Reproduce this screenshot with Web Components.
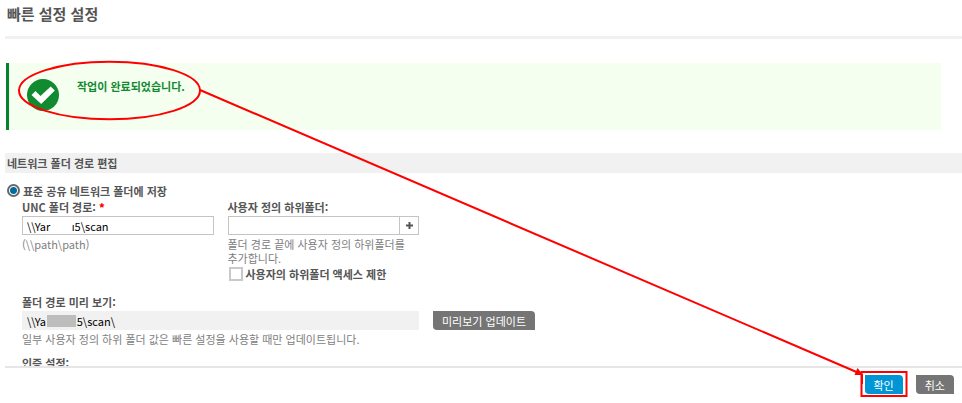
<!DOCTYPE html>
<html lang="ko">
<head>
<meta charset="utf-8">
<title>빠른 설정 설정</title>
<style>
    html, body {
        height: 100%;
        margin: 0;
    }
    body {
        background: #fff;
        color: #555;
        font: 11px/14px "Noto Sans CJK KR", "Noto Sans", sans-serif;
        word-break: keep-all;
    }
</style>
</head>
<body>

<setup-page>
    <page-title>빠른 설정 설정</page-title>
    <success-message>작업이 완료되었습니다.</success-message>
    <section-title>네트워크 폴더 경로 편집</section-title>
    <folder-form></folder-form>
    <action-button slot="actions" primary label="확인"></action-button>
    <action-button slot="actions" label="취소"></action-button>
</setup-page>
<callout-marks></callout-marks>

<script>

    const define = function (name, html, setup) {

        const template = document.createElement('template');
        template.innerHTML = html;

        window.customElements.define(name, class extends HTMLElement {

            constructor() {
                super();
                this.attachShadow({mode: 'open'});
                this.shadowRoot.appendChild(template.content.cloneNode(true));
            }

            connectedCallback() {
                if (setup) {
                    setup(this, this.shadowRoot);
                }
            }

        });

    };

    define('setup-page', `
        <main><slot></slot></main>
        <footer><slot name="actions"></slot></footer>

        <style>
            :host {
                display: flex;
                flex-direction: column;
                height: 100vh;
                padding-left: 5px;
                box-sizing: border-box;
            }
            main {
                flex: 1;
                min-height: 0;
                overflow: hidden;
            }
            footer {
                display: flex;
                justify-content: flex-end;
                gap: 13px;
                padding: 7px 8px 9px;
                border-top: 2px solid #e6e6e6;
            }
        </style>
    `);

    define('page-title', `
        <h1><slot></slot></h1>

        <style>
            :host {
                display: block;
            }
            h1 {
                margin: 0;
                padding: 0 2px 8px;
                font-size: 15px;
                line-height: 28px;
            }
            :host::after {
                content: "";
                display: block;
                height: 3px;
                background: repeating-conic-gradient(#ebebeb 0 25%, #f6f6f6 0 50%) 0 0 / 2px 2px;
            }
        </style>
    `);

    define('success-message', `
        <svg width="32" height="32" viewBox="0 0 32 32" aria-hidden="true">
            <circle cx="16" cy="16" r="16" fill="#128a30"/>
            <path d="M4.5 16 8.5 12 13.5 17 23.7 7.5 27.8 11.6 14.2 25Z" fill="#fff"/>
        </svg>
        <p><slot></slot></p>

        <style>
            :host {
                display: flex;
                align-items: flex-start;
                gap: 18px;
                min-height: 67px;
                margin: 24px 21px 23px 1px;
                padding: 16px 18px;
                box-sizing: border-box;
                border-left: 3px solid #00852a;
                background: #f4fff0;
            }
            p {
                margin: 0;
                color: #128a30;
                font-weight: bold;
            }
        </style>
    `);

    define('section-title', `
        <h2><slot></slot></h2>

        <style>
            :host {
                display: block;
                background: #f1f1f1;
            }
            h2 {
                margin: 0;
                padding: 0 2px;
                font-size: 11px;
                line-height: 20px;
            }
        </style>
    `);

    define('action-button', `
        <button type="button"></button>

        <style>
            :host {
                display: block;
            }
            button {
                display: block;
                height: 19px;
                padding: 0 9px;
                border: 0;
                border-radius: 0 4px 0 4px;
                background: #757575;
                color: #fff;
                font: inherit;
                white-space: nowrap;
            }
            :host([primary]) button {
                background: #0096d6;
            }
        </style>
    `, function (host, root) {
        root.querySelector('button').textContent = host.getAttribute('label');
    });

    define('text-field', `
        <label for="field"><span id="label"></span><b hidden> *</b></label>
        <div class="box">
            <input id="field" type="text">
            <button type="button" aria-label="추가" hidden>
                <svg width="7" height="7" viewBox="0 0 7 7"><path d="M3.5 0V7M0 3.5H7" stroke="#555" stroke-width="2"/></svg>
            </button>
        </div>
        <p><slot></slot></p>

        <style>
            :host {
                display: block;
            }
            [hidden] {
                display: none !important;
            }
            label {
                display: block;
                line-height: 17px;
                font-weight: bold;
            }
            b {
                color: #f00;
            }
            .box {
                display: flex;
                height: 19px;
                box-sizing: border-box;
                border: 1px solid #c4c4c4;
                background: #fff;
            }
            input {
                flex: 1;
                min-width: 0;
                padding: 0 4px;
                border: 0;
                outline: 0;
                background: none;
                color: #000;
                font: inherit;
            }
            button {
                display: grid;
                place-items: center;
                width: 19px;
                padding: 0;
                border: 0;
                border-left: 1px solid #c4c4c4;
                background: #fff;
            }
            p {
                margin: 2px 0 0;
                color: #808080;
            }
            :host([readonly]) .box {
                border-color: #f1f1f1;
                background: #f1f1f1;
            }
        </style>
    `, function (host, root) {
        const input = root.querySelector('input');
        root.querySelector('#label').textContent = host.getAttribute('label');
        root.querySelector('b').hidden = !host.hasAttribute('required');
        root.querySelector('button').hidden = !host.hasAttribute('addable');
        input.value = host.getAttribute('value') || '';
        input.readOnly = host.hasAttribute('readonly');
    });

    define('folder-form', `
        <label class="choice"><input type="radio" checked>표준 공유 네트워크 폴더에 저장</label>
        <div class="fields">
            <text-field label="UNC 폴더 경로:" required value="\\\\Yar&nbsp;&nbsp;&nbsp;&nbsp;&nbsp;&nbsp;&nbsp;ı5\\scan">(\\\\path\\path)</text-field>
            <div>
                <text-field label="사용자 정의 하위폴더:" addable>폴더 경로 끝에 사용자 정의 하위폴더를 추가합니다.</text-field>
                <label class="limit"><input type="checkbox">사용자의 하위폴더 액세스 제한</label>
            </div>
        </div>
        <div class="preview">
            <div class="path">
                <text-field label="폴더 경로 미리 보기:" readonly value="\\\\Ya&nbsp;&nbsp;&nbsp;&nbsp;&nbsp;&nbsp;&nbsp;&nbsp;&nbsp;&nbsp;5\\scan\\">일부 사용자 정의 하위 폴더 값은 빠른 설정을 사용할 때만 업데이트됩니다.</text-field>
                <span class="mask"></span>
            </div>
            <action-button label="미리보기 업데이트"></action-button>
        </div>
        <h3>인증 설정:</h3>

        <style>
            :host {
                display: block;
                padding: 9px 0 0 17px;
            }
            input {
                appearance: none;
                flex: none;
                box-sizing: border-box;
                width: 13px;
                height: 13px;
                margin: 0;
                background: #fff;
            }
            input[type=radio] {
                border: 2px solid #666;
                border-radius: 50%;
                background: radial-gradient(circle, #0069a0 3px, #fff 4px);
            }
            input[type=checkbox] {
                width: 14px;
                height: 14px;
                border: 2px solid #c9c9c9;
            }
            .choice, .limit {
                display: flex;
                align-items: center;
                gap: 3px;
                font-weight: bold;
            }
            .choice {
                height: 17px;
                margin-left: -15px;
            }
            .limit {
                height: 14px;
                margin: 2px 0 0 1px;
            }
            .fields {
                display: grid;
                grid-template-columns: 1fr 1fr;
                gap: 14px;
                max-width: 397px;
            }
            .preview {
                display: flex;
                gap: 14px;
                margin-top: 13px;
            }
            .preview action-button {
                margin-top: 17px;
            }
            .path {
                position: relative;
                flex: 0 1 397px;
            }
            .mask {
                position: absolute;
                left: 25px;
                top: 21px;
                width: 29px;
                height: 12px;
                background: #bdbdbd;
            }
            h3 {
                margin: 9px 0 0;
                font-size: 11px;
                line-height: 17px;
            }
        </style>
    `);

    // red ellipse, arrow and frame drawn over the page
    define('callout-marks', `
        <svg width="962" height="403" viewBox="0 0 962 403" fill="none" stroke="#f00" stroke-width="2" aria-hidden="true">
            <ellipse cx="109.5" cy="90.5" rx="90.5" ry="28.8"/>
            <path d="M200 90 860 373.5M862 374V384"/>
            <path d="M863 375 854.5 375 857.5 368Z" fill="#f00" stroke="none"/>
            <rect x="861.5" y="372" width="45" height="24"/>
        </svg>

        <style>
            :host {
                position: absolute;
                top: 0;
                left: 0;
                pointer-events: none;
            }
            svg {
                display: block;
            }
        </style>
    `);

</script>
</body>
</html>
